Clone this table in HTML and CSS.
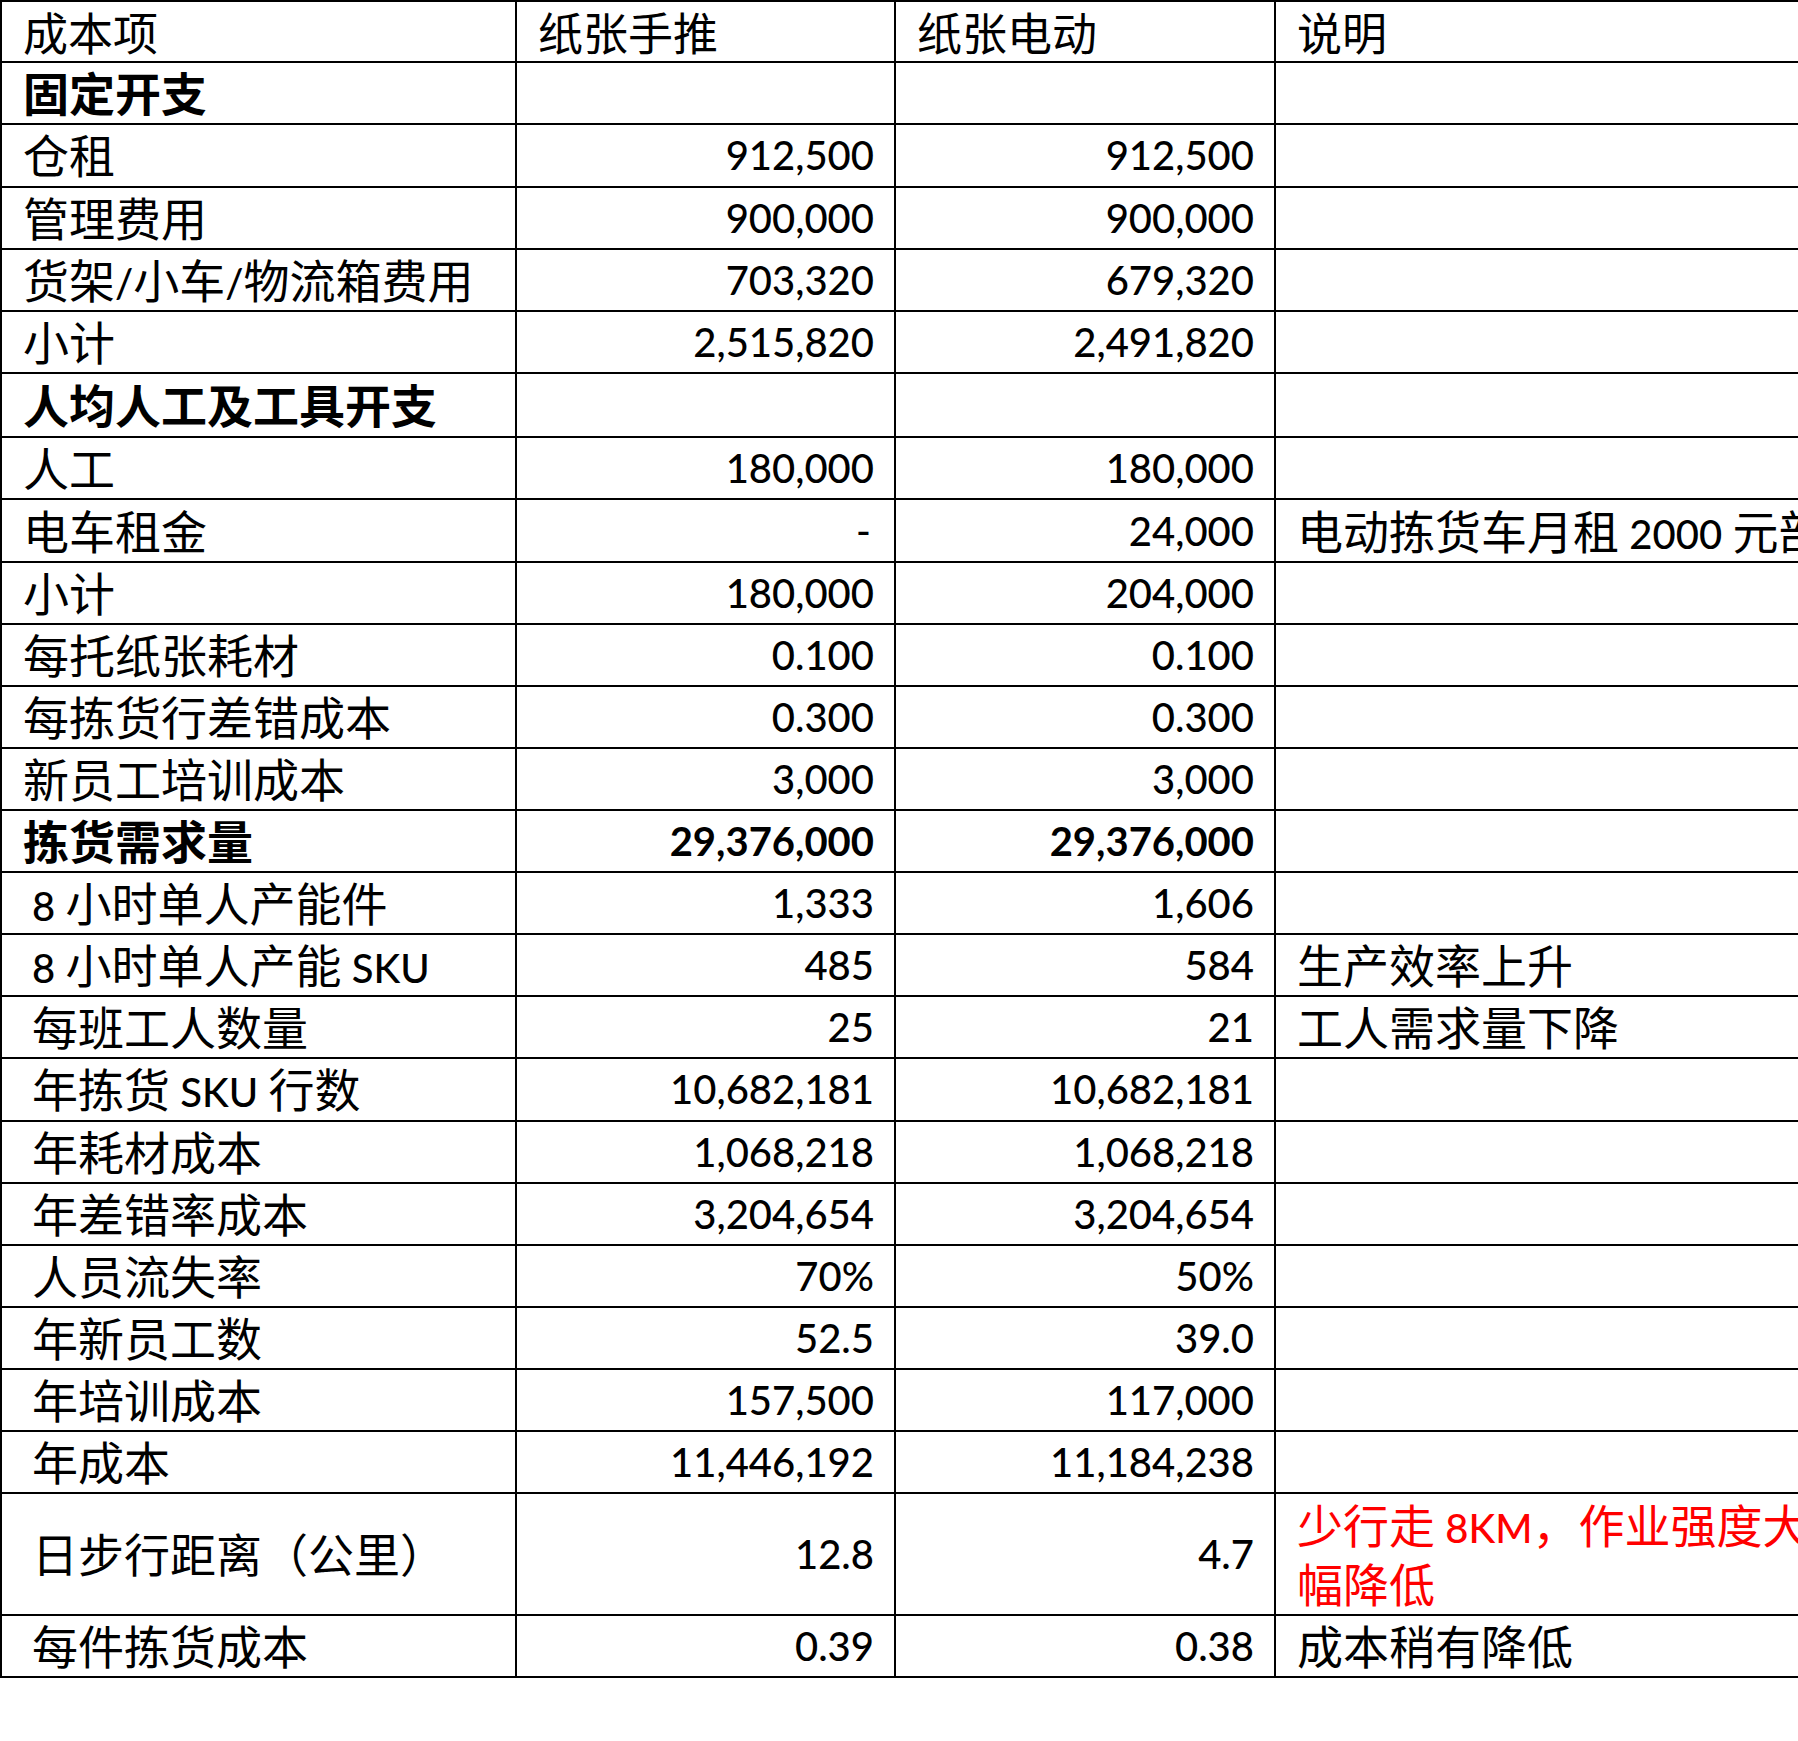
FILE: index.html
```html
<!DOCTYPE html>
<html lang="zh-CN">
<head>
<meta charset="utf-8">
<title>成本对比</title>
<link rel="stylesheet" href="styles.css">
</head>
<body>
<div class="viewport">
  <div class="sheet">
    <div class="row first">
      <div class="c">成本项</div>
      <div class="c">纸张手推</div>
      <div class="c">纸张电动</div>
      <div class="c">说明</div>
    </div>
    <div class="row">
      <div class="c b">固定开支</div>
      <div class="c"></div>
      <div class="c"></div>
      <div class="c"></div>
    </div>
    <div class="row">
      <div class="c">仓租</div>
      <div class="c num">912,500</div>
      <div class="c num">912,500</div>
      <div class="c"></div>
    </div>
    <div class="row">
      <div class="c">管理费用</div>
      <div class="c num">900,000</div>
      <div class="c num">900,000</div>
      <div class="c"></div>
    </div>
    <div class="row">
      <div class="c"><span>货架<span class="lat">/</span>小车<span class="lat">/</span>物流箱费用</span></div>
      <div class="c num">703,320</div>
      <div class="c num">679,320</div>
      <div class="c"></div>
    </div>
    <div class="row">
      <div class="c">小计</div>
      <div class="c num">2,515,820</div>
      <div class="c num">2,491,820</div>
      <div class="c"></div>
    </div>
    <div class="row tall">
      <div class="c b">人均人工及工具开支</div>
      <div class="c"></div>
      <div class="c"></div>
      <div class="c"></div>
    </div>
    <div class="row">
      <div class="c">人工</div>
      <div class="c num">180,000</div>
      <div class="c num">180,000</div>
      <div class="c"></div>
    </div>
    <div class="row">
      <div class="c">电车租金</div>
      <div class="c num dash">-</div>
      <div class="c num">24,000</div>
      <div class="c"><span>电动拣货车月租 <span class="lat">2000</span> 元部</span></div>
    </div>
    <div class="row">
      <div class="c">小计</div>
      <div class="c num">180,000</div>
      <div class="c num">204,000</div>
      <div class="c"></div>
    </div>
    <div class="row">
      <div class="c">每托纸张耗材</div>
      <div class="c num">0.100</div>
      <div class="c num">0.100</div>
      <div class="c"></div>
    </div>
    <div class="row">
      <div class="c">每拣货行差错成本</div>
      <div class="c num">0.300</div>
      <div class="c num">0.300</div>
      <div class="c"></div>
    </div>
    <div class="row">
      <div class="c">新员工培训成本</div>
      <div class="c num">3,000</div>
      <div class="c num">3,000</div>
      <div class="c"></div>
    </div>
    <div class="row">
      <div class="c b">拣货需求量</div>
      <div class="c num b">29,376,000</div>
      <div class="c num b">29,376,000</div>
      <div class="c"></div>
    </div>
    <div class="row">
      <div class="c ind"><span><span class="lat">8</span> 小时单人产能件</span></div>
      <div class="c num">1,333</div>
      <div class="c num">1,606</div>
      <div class="c"></div>
    </div>
    <div class="row">
      <div class="c ind"><span><span class="lat">8</span> 小时单人产能 <span class="lat">SKU</span></span></div>
      <div class="c num">485</div>
      <div class="c num">584</div>
      <div class="c">生产效率上升</div>
    </div>
    <div class="row">
      <div class="c ind">每班工人数量</div>
      <div class="c num">25</div>
      <div class="c num">21</div>
      <div class="c">工人需求量下降</div>
    </div>
    <div class="row">
      <div class="c ind"><span>年拣货 <span class="lat">SKU</span> 行数</span></div>
      <div class="c num">10,682,181</div>
      <div class="c num">10,682,181</div>
      <div class="c"></div>
    </div>
    <div class="row">
      <div class="c ind">年耗材成本</div>
      <div class="c num">1,068,218</div>
      <div class="c num">1,068,218</div>
      <div class="c"></div>
    </div>
    <div class="row">
      <div class="c ind">年差错率成本</div>
      <div class="c num">3,204,654</div>
      <div class="c num">3,204,654</div>
      <div class="c"></div>
    </div>
    <div class="row">
      <div class="c ind">人员流失率</div>
      <div class="c num">70%</div>
      <div class="c num">50%</div>
      <div class="c"></div>
    </div>
    <div class="row">
      <div class="c ind">年新员工数</div>
      <div class="c num">52.5</div>
      <div class="c num">39.0</div>
      <div class="c"></div>
    </div>
    <div class="row">
      <div class="c ind">年培训成本</div>
      <div class="c num">157,500</div>
      <div class="c num">117,000</div>
      <div class="c"></div>
    </div>
    <div class="row">
      <div class="c ind">年成本</div>
      <div class="c num">11,446,192</div>
      <div class="c num">11,184,238</div>
      <div class="c"></div>
    </div>
    <div class="row double">
      <div class="c ind">日步行距离（公里）</div>
      <div class="c num">12.8</div>
      <div class="c num">4.7</div>
      <div class="c wrap red"><span>少行走 <span class="lat">8KM</span>，作业强度大幅降低</span></div>
    </div>
    <div class="row last">
      <div class="c ind">每件拣货成本</div>
      <div class="c num">0.39</div>
      <div class="c num">0.38</div>
      <div class="c">成本稍有降低</div>
    </div>
  </div>
</div>
</body>
</html>
```

FILE: styles.css
```css
html, body {
  margin: 0;
  padding: 0;
  background: #fff;
  overflow: hidden;
}

.viewport {
  width: 100vw;
  height: 100vh;
  overflow: hidden;
}

.sheet {
  width: max-content;
  border-top: 2px solid #000;
  border-left: 2px solid #000;
  font-family: "Noto Sans CJK SC", sans-serif;
  font-size: 46px;
  color: #000;
}

.row {
  display: grid;
  grid-template-columns: 515px 379px 380px 560px;
  grid-template-rows: 100%;
  height: 62.12px;
}

.row.first { height: 61.3px; }
.row.tall { height: 64.5px; }
.row.double { height: 121.7px; }
.row.last { height: 61.7px; }

.c {
  box-sizing: border-box;
  min-height: 0;
  border-right: 2px solid #000;
  border-bottom: 2px solid #000;
  display: flex;
  align-items: center;
  padding: 0 20px 4px 21px;
  line-height: 54px;
  white-space: nowrap;
}

.row.first .c {
  font-size: 45px;
  padding-bottom: 0;
}

.c.ind { padding-left: 30px; }

.c.num {
  justify-content: flex-end;
  font-family: Lato, "Noto Sans CJK SC", sans-serif;
  font-size: 40px;
  font-weight: 500;
  padding-bottom: 0;
  padding-right: 20px;
}

.c.num.dash { padding-right: 23px; }

.c.b { font-weight: 700; }

.c.wrap {
  white-space: normal;
  line-height: 59px;
  padding-bottom: 2px;
}

.red { color: #ff0000; }

.lat {
  font-family: Lato, "Noto Sans CJK SC", sans-serif;
  font-size: 40px;
  font-weight: 500;
  line-height: 1;
}
```
